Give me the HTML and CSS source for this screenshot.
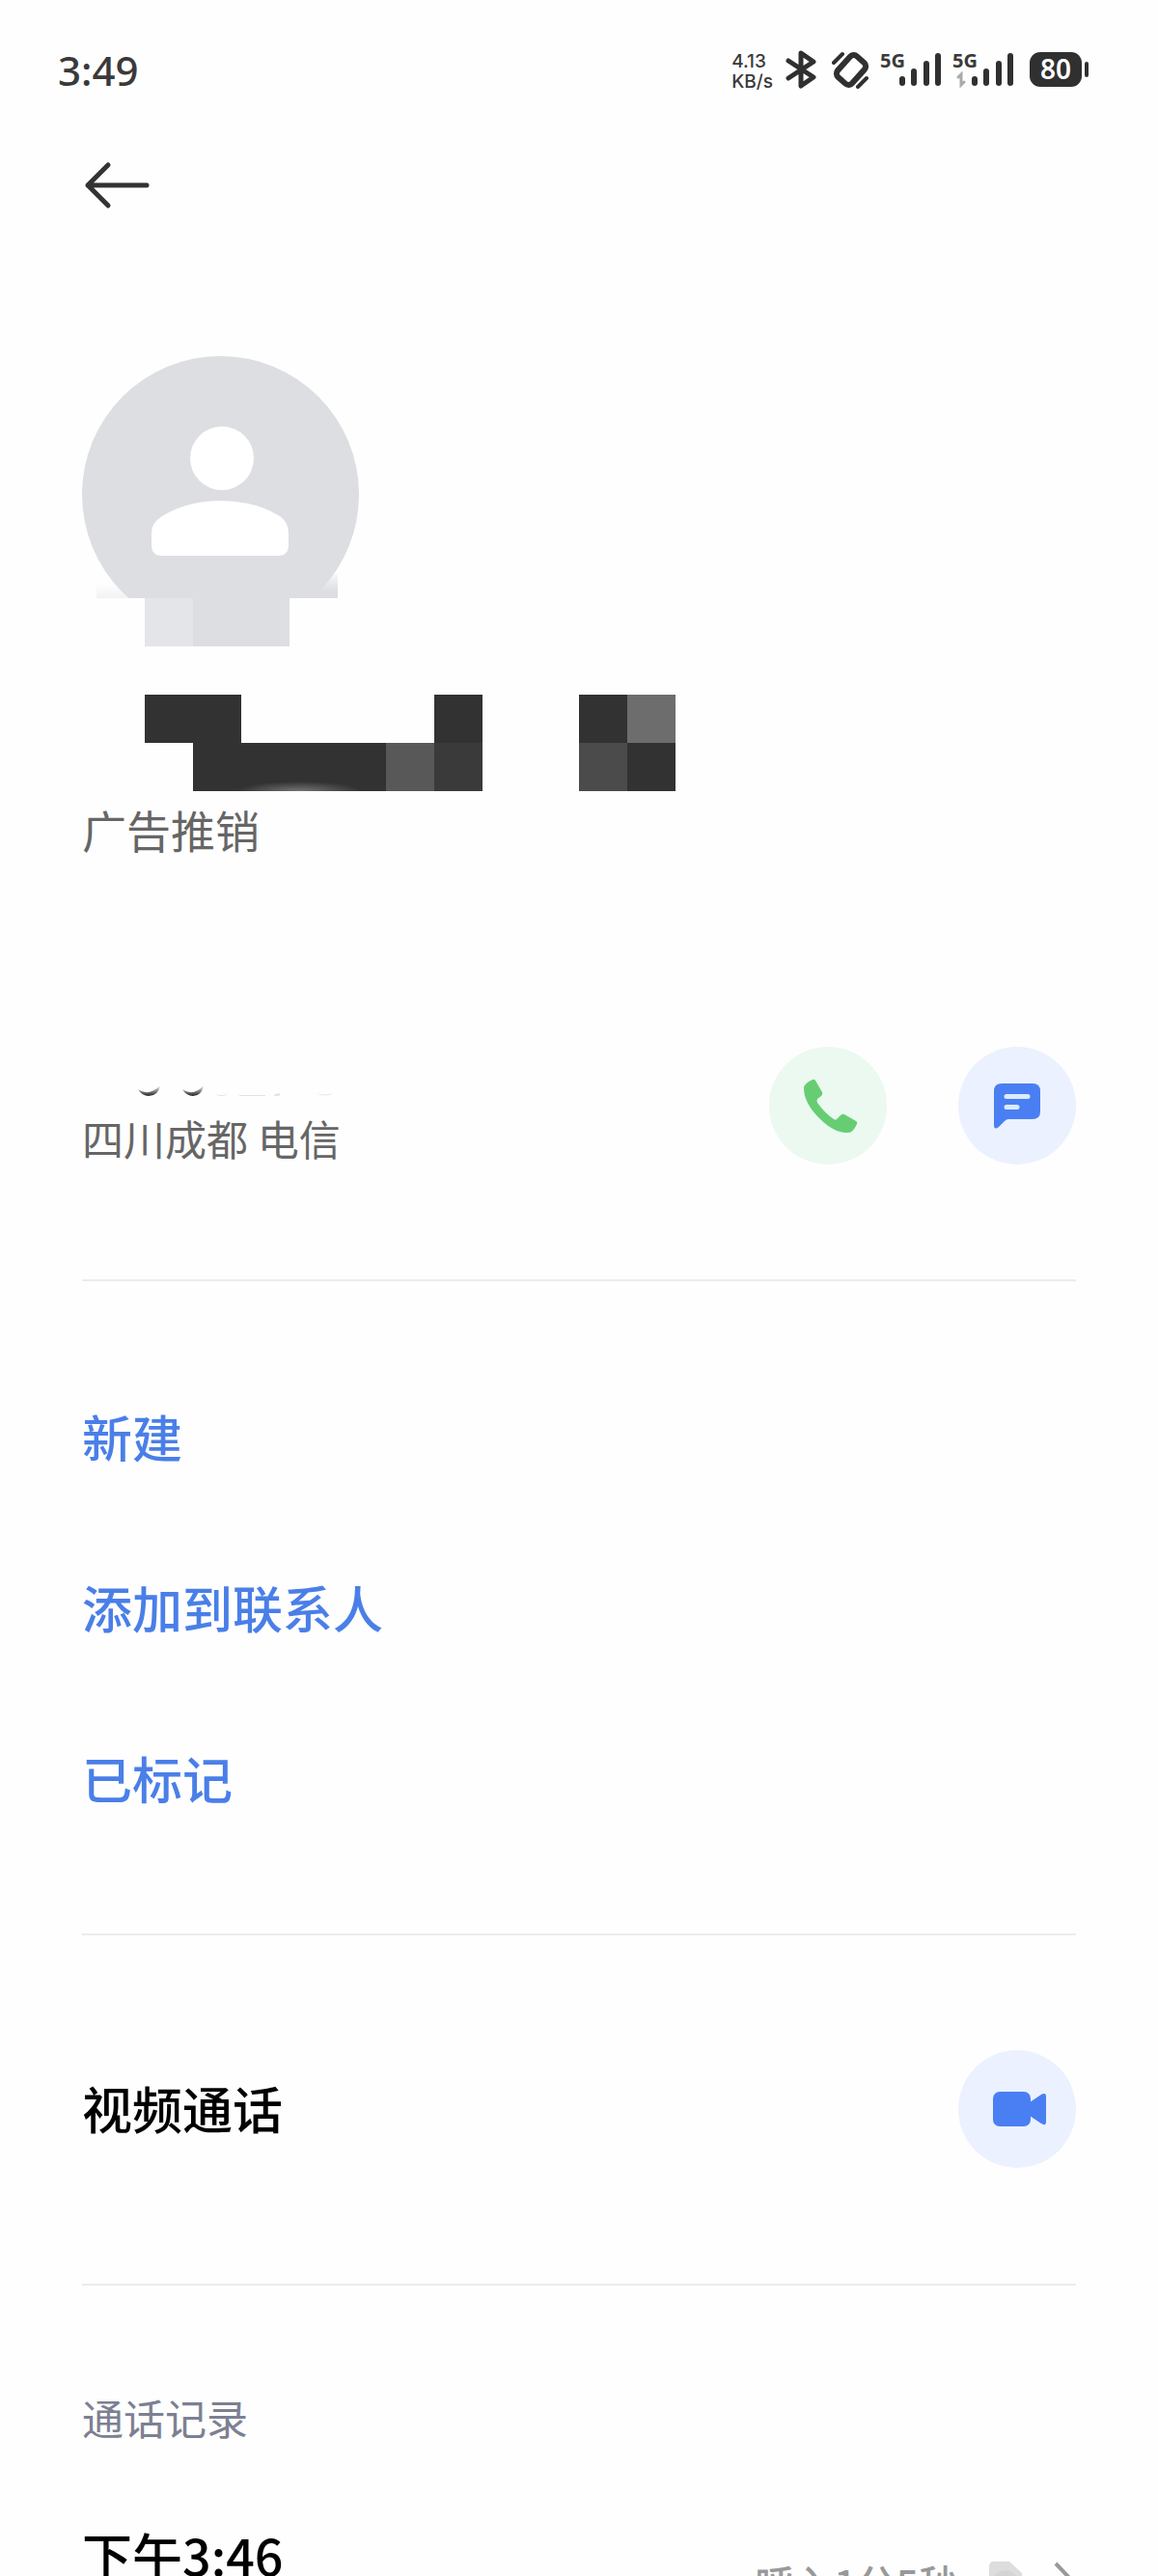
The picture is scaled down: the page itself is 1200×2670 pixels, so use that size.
FILE: index.html
```html
<!DOCTYPE html>
<html lang="zh-CN">
<head>
    <meta charset="UTF-8">
    <meta name="viewport" content="width=device-width, initial-scale=1.0">
    <title>联系人详情</title>
    <link rel="stylesheet" href="styles.css">
</head>
<body>
    <div class="screen">
        <div class="status-bar">
            <span class="time">3:49</span>
            <div class="status-icons">
                <div class="speed">
                    <span>4.13</span>
                    <span>KB/s</span>
                </div>
                <svg width="35" height="40" viewBox="0 0 35 40">
                    <path d="M4 11L30 28L17 37V3L30 12L4 29" fill="none" stroke="#303030" stroke-width="5" stroke-linejoin="round" stroke-linecap="round"/>
                </svg>
                <svg width="40" height="40" viewBox="0 0 40 40">
                    <rect x="12" y="6" width="20" height="29" rx="5" transform="rotate(42 22 20.500)" fill="none" stroke="#303030" stroke-width="6"/>
                    <path d="M4 13L13 4M29 38L38 29" stroke="#303030" stroke-width="4" stroke-linecap="round"/>
                </svg>
                <svg class="signal" width="63" height="40" viewBox="0 0 63 40">
                    <text x="0" y="18">5G</text>
                    <path d="M23 30V34M35 22V34M48 14V34M60 6V34"/>
                </svg>
                <svg class="signal" width="63" height="40" viewBox="0 0 63 40">
                    <text x="0" y="18">5G</text>
                    <path d="M23 30V34M35 22V34M48 14V34M60 6V34"/>
                    <path class="data" d="M6 28L9 25V36L12 33"/>
                </svg>
                <svg class="battery" width="66" height="40" viewBox="0 0 66 40">
                    <rect x="5" y="2" width="54" height="36" rx="11"/>
                    <rect x="62" y="12" width="4" height="16" rx="2"/>
                    <text x="32" y="30">80</text>
                </svg>
            </div>
        </div>

        <a class="back" href="#" aria-label="返回">
            <svg width="70" height="50" viewBox="0 0 70 50">
                <path d="M26 4L5 25L26 46M5 25H66" fill="none" stroke="#333" stroke-width="5" stroke-linecap="round" stroke-linejoin="round"/>
            </svg>
        </a>

        <main class="content">
            <!-- Avatar, lower edge covered by blocks -->
            <svg class="avatar" width="288" height="302" viewBox="0 0 288 302">
                <defs>
                    <linearGradient id="fade" x1="0" y1="0" x2="0" y2="1">
                        <stop offset="0" stop-color="#dddee2" stop-opacity="0.200"/>
                        <stop offset="0.700" stop-color="#dddee2"/>
                    </linearGradient>
                    <linearGradient id="fadeLight" x1="0" y1="0" x2="0" y2="1">
                        <stop offset="0" stop-color="#f2f2f3" stop-opacity="0"/>
                        <stop offset="1" stop-color="#f2f2f3"/>
                    </linearGradient>
                    <clipPath id="top"><rect width="288" height="251"/></clipPath>
                </defs>
                <path d="M15 236H50V251H15Z" fill="url(#fadeLight)"/>
                <path d="M240 226H265V251H215V236Z" fill="url(#fade)"/>
                <circle cx="143.500" cy="143.500" r="143.500" fill="#dddee2" clip-path="url(#top)"/>
                <rect x="65" y="251" width="50" height="50" fill="#e4e5e9"/>
                <rect x="115" y="251" width="100" height="50" fill="#dddee2"/>
                <circle cx="145" cy="106" r="33" fill="#fff"/>
                <path d="M83 166Q109 150 144 150Q179 150 205 166Q214 173 214 183V196Q214 207 203 207H83Q72 207 72 196V183Q72 173 83 166Z" fill="#fff"/>
            </svg>

            <!-- Hidden name -->
            <svg class="name" width="615" height="100" viewBox="0 0 615 100">
                <defs>
                    <radialGradient id="glow">
                        <stop offset="0" stop-color="#747474"/>
                        <stop offset="1" stop-color="#323232"/>
                    </radialGradient>
                </defs>
                <path d="M65 0H165V50H315V100H115V50H65ZM365 0H415V50H365ZM515 0H565V50H515ZM565 50H615V100H565Z" fill="#323232"/>
                <ellipse cx="225" cy="100" rx="65" ry="10" fill="url(#glow)"/>
                <path d="M315 50H365V100H315Z" fill="#585858"/>
                <path d="M365 50H415V100H365Z" fill="#3a3a3a"/>
                <path d="M515 50H565V100H515Z" fill="#4b4b4b"/>
                <path d="M565 0H615V50H565Z" fill="#6d6d6d"/>
            </svg>
            <p class="tag">广告推销</p>

            <section class="row number-row">
                <div class="number-text">
                    <svg class="number" width="270" height="14" viewBox="0 0 270 14">
                        <defs>
                            <linearGradient id="digit" x1="0" y1="0" x2="0" y2="1">
                                <stop offset="0" stop-color="#fefefe"/>
                                <stop offset="1" stop-color="#222"/>
                            </linearGradient>
                        </defs>
                        <path d="M58 6Q69 14 81 2Q79 13 69 13Q62 13 58 6ZM104 6Q115 14 126 2Q124 13 115 13Q108 13 104 6Z" fill="url(#digit)"/>
                        <path d="M137 11Q144 13 152 11Q144 15 137 11ZM163 12H190V13H163ZM200 11L206 10L204 13H199ZM243 10Q252 13 261 10Q252 15 243 10Z" fill="#e2e2e2"/>
                    </svg>
                    <p class="sub">四川成都 电信</p>
                </div>
                <div class="buttons">
                    <button class="round green" type="button" aria-label="拨打电话">
                        <svg width="122" height="122" viewBox="0 0 122 122">
                            <path d="M36 43Q36 38 45 34Q47 33 48 35L55 47Q56 49 54 51L50 54Q49 56 50 58Q58 69 67 75Q69 76 70 75L74 71Q76 69 78 70L90 77Q92 78 91 80Q87 89 82 89Q68 90 52 74Q36 58 36 43Z" fill="#67cd72"/>
                        </svg>
                    </button>
                    <button class="round blue" type="button" aria-label="发送短信">
                        <svg width="122" height="122" viewBox="0 0 122 122">
                            <path d="M45 38H77Q85 38 85 46V67Q85 75 77 75H52Q50 75 48 77L42 83Q37 87 37 81V46Q37 38 45 38Z" fill="#4a7ff3"/>
                            <path d="M50 51.500H72M50 62.500H61" stroke="#dcecff" stroke-width="5" stroke-linecap="round"/>
                        </svg>
                    </button>
                </div>
            </section>

            <section class="actions">
                <button type="button">新建</button>
                <button type="button">添加到联系人</button>
                <button type="button">已标记</button>
            </section>

            <section class="row video-row">
                <h2>视频通话</h2>
                <button class="round blue" type="button" aria-label="视频通话">
                    <svg width="122" height="122" viewBox="0 0 122 122">
                        <rect x="36" y="43" width="39" height="36" rx="7" fill="#4a7ff3"/>
                        <path d="M74 54L86 46Q91 43 91 48V74Q91 79 86 76L74 68Z" fill="#4a7ff3"/>
                    </svg>
                </button>
            </section>

            <section class="log">
                <h3>通话记录</h3>
                <a class="log-item" href="#">
                    <span class="log-time">下午3:46</span>
                    <span class="log-info">
                        呼入1分5秒
                        <svg width="34" height="42" viewBox="0 0 34 42">
                            <path d="M5 0H21L34 12V37Q34 42 29 42H5Q0 42 0 37V5Q0 0 5 0Z" fill="#ddd"/>
                            <circle cx="17" cy="22" r="13" fill="#ccc" opacity="0.500"/>
                        </svg>
                        <svg width="24" height="44" viewBox="0 0 24 44">
                            <path d="M3 3L21 22L3 41" fill="none" stroke="#999" stroke-width="4"/>
                        </svg>
                    </span>
                </a>
            </section>
        </main>
    </div>
</body>
</html>
```
FILE: styles.css
```css
* {
    box-sizing: border-box;
}

body {
    margin: 0;
    background-color: #fefefe;
    color: #000;
    font-family: "Noto Sans CJK SC", sans-serif;
}

.screen {
    height: 100vh;
    overflow: hidden; /* the call log runs on below the fold */
}

h2, h3, p {
    margin: 0;
}

svg {
    display: block;
    flex-shrink: 0;
}

button {
    padding: 0;
    border: none;
    background: none;
    font-family: inherit;
    text-align: left;
    cursor: pointer;
}

a {
    color: inherit;
    text-decoration: none;
}

/* Status bar */
.status-bar {
    display: flex;
    justify-content: space-between;
    align-items: center;
    height: 144px;
    padding: 0 72px 0 60px;
    color: #3a3a3a;
}

.time {
    font-family: "Noto Sans", sans-serif;
    font-size: 42px;
    font-weight: 500;
}

.status-icons {
    display: flex;
    align-items: center;
    gap: 12px;
}

.speed {
    display: flex;
    flex-direction: column;
    padding-top: 4px;
    font-family: Inter, sans-serif;
    font-size: 19px;
    font-weight: 500;
    line-height: 21px;
}

.signal {
    overflow: visible;
}

.signal text {
    font-family: "Noto Sans", sans-serif;
    font-size: 20px;
    font-weight: 700;
    fill: #3a3a3a;
}

.signal path {
    fill: none;
    stroke: #303030;
    stroke-width: 6;
    stroke-linecap: round;
}

.signal .data {
    stroke: #aaa;
    stroke-width: 3;
}

.battery rect {
    fill: #303030;
}

.battery text {
    font-family: "Noto Sans", sans-serif;
    font-size: 28px;
    font-weight: 600;
    text-anchor: middle;
    fill: #fff;
}

.back {
    display: block;
    width: 70px;
    margin: 23px 0 0 86px;
}

/* Contact */
.content {
    padding: 152px 85px 0;
}

.name {
    margin-top: 49px;
}

.tag {
    margin-top: 5px;
    font-size: 46px;
    line-height: 68px;
    color: #666;
}

.row {
    display: flex;
    justify-content: space-between;
    align-items: center;
    border-bottom: 2px solid #ececec;
}

.number-row {
    padding: 192px 0 119px;
}

.number-text {
    padding-top: 38px;
}

.sub {
    margin-top: 14px;
    font-size: 43px;
    line-height: 56px;
    color: #666;
}

.buttons {
    display: flex;
    gap: 74px;
}

.round {
    width: 122px;
    height: 122px;
    border-radius: 50%;
}

.green {
    background-color: #ebf9f0;
}

.blue {
    background-color: #ebf1fe;
}

.actions {
    display: flex;
    flex-direction: column;
    padding: 72px 0 73px;
    border-bottom: 2px solid #ececec;
}

.actions button {
    height: 177px;
    font-size: 52px;
    font-weight: 500;
    color: #4a7fe8;
}

.video-row {
    padding: 119px 0 120px;
}

h2 {
    padding-bottom: 4px;
    font-size: 52px;
    font-weight: 500;
}

/* Call log */
.log h3 {
    margin-top: 104px;
    font-size: 43px;
    font-weight: 400;
    line-height: 64px;
    color: #7c8093;
}

.log-item {
    display: flex;
    justify-content: space-between;
    margin-top: 72px;
}

.log-time {
    font-size: 52px;
    font-weight: 500;
    line-height: 78px;
}

.log-info {
    display: flex;
    align-items: center;
    gap: 32px;
    padding-top: 30px;
    font-size: 41px;
    font-weight: 500;
    line-height: 74px;
    color: #999;
}
```
